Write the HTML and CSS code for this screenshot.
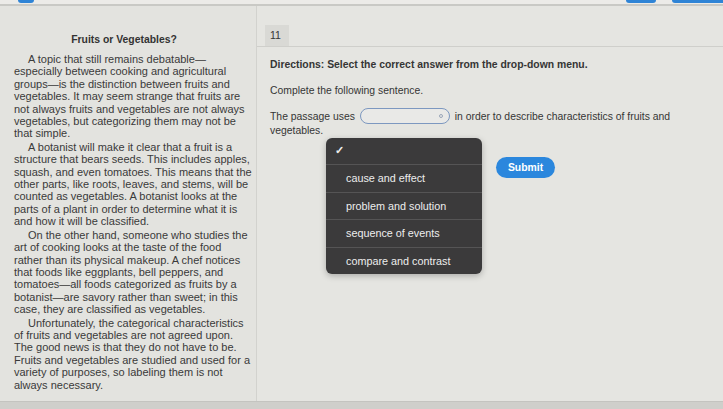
FILE: index.html
```html
<!DOCTYPE html>
<html lang="en">
<head>
<meta charset="UTF-8" />
<meta name="viewport" content="width=device-width,initial-scale=1" />
<title>Fruits or Vegetables?</title>
<link rel="stylesheet" href="styles.css">
</head>
<body>
<div class="topbar">
  <span class="tab tab-left"></span>
  <span class="tab tab-right1"></span>
  <span class="tab tab-right2"></span>
</div>
<main class="layout">
  <section class="passage">
    <h1>Fruits or Vegetables?</h1>
    <p>A topic that still remains debatable—<br>especially between cooking and agricultural<br>groups—is the distinction between fruits and<br>vegetables. It may seem strange that fruits are<br>not always fruits and vegetables are not always<br>vegetables, but categorizing them may not be<br>that simple.</p>
    <p>A botanist will make it clear that a fruit is a<br>structure that bears seeds. This includes apples,<br>squash, and even tomatoes. This means that the<br>other parts, like roots, leaves, and stems, will be<br>counted as vegetables. A botanist looks at the<br>parts of a plant in order to determine what it is<br>and how it will be classified.</p>
    <p>On the other hand, someone who studies the<br>art of cooking looks at the taste of the food<br>rather than its physical makeup. A chef notices<br>that foods like eggplants, bell peppers, and<br>tomatoes—all foods categorized as fruits by a<br>botanist—are savory rather than sweet; in this<br>case, they are classified as vegetables.</p>
    <p>Unfortunately, the categorical characteristics<br>of fruits and vegetables are not agreed upon.<br>The good news is that they do not have to be.<br>Fruits and vegetables are studied and used for a<br>variety of purposes, so labeling them is not<br>always necessary.</p>
  </section>
  <section class="question">
    <div class="qhead"><span class="qnum">11</span></div>
    <div class="qbody">
      <p class="directions">Directions: Select the correct answer from the drop-down menu.</p>
      <p class="prompt">Complete the following sentence.</p>
      <p class="sentence">The passage uses <span class="select"><span class="knob"></span></span> in order to describe characteristics of fruits and vegetables.</p>
      <ul class="menu">
        <li class="checked">&#10003;</li>
        <li>cause and effect</li>
        <li>problem and solution</li>
        <li>sequence of events</li>
        <li>compare and contrast</li>
      </ul>
      <div class="actions">
        <button type="button">Submit</button>
      </div>
    </div>
  </section>
</main>
<footer class="bottombar"></footer>
</body>
</html>
```

FILE: styles.css
```css
* {
  box-sizing: border-box;
}
html, body {
  height: 100%;
}
body {
  margin: 0;
  font-family: 'Liberation Sans', Arial, sans-serif;
  color: #353535;
  background: #e4e4e0;
  display: flex;
  flex-direction: column;
  overflow: hidden;
}
.topbar {
  position: relative;
  height: 6px;
  flex-shrink: 0;
  background: #ecebe8;
  border-bottom: 2px solid #c9c9c5;
}
.tab {
  position: absolute;
  top: 0;
  height: 3px;
  background: #2f84d6;
  border-radius: 0 0 4px 4px;
}
.tab-left { left: 18px; width: 16px; }
.tab-right1 { left: 626px; width: 30px; }
.tab-right2 { left: 672px; width: 60px; }

.layout {
  flex: 1;
  display: flex;
  min-height: 0;
}
.passage {
  width: 257px;
  flex-shrink: 0;
  padding: 27px 0 0 14px;
  border-right: 1px solid #d2d2ce;
  background: #e3e3df;
  color: #3a3a3a;
  font-size: 11px;
  line-height: 12.4px;
  white-space: nowrap;
}
.passage h1 {
  margin: 0 0 6px;
  padding-right: 22px;
  font-size: 10.4px;
  font-weight: 700;
  text-align: center;
  line-height: 14px;
  color: #333;
}
.passage p {
  margin: 0 0 1px;
  text-indent: 14px;
}

.question {
  flex: 1;
  background: #e5e5e1;
}
.qhead {
  margin-top: 19px;
  padding-left: 8px;
  border-bottom: 1px solid #cfcfcb;
}
.qnum {
  display: inline-block;
  width: 24px;
  height: 21px;
  line-height: 21px;
  padding-left: 5px;
  font-size: 10.5px;
  background: #d9d9d5;
}
.qbody {
  position: relative;
  padding: 11px 0 0 13px;
  font-size: 10.4px;
}
.qbody p {
  margin: 0;
}
.directions {
  font-weight: 700;
  line-height: 14px;
  margin-bottom: 12px !important;
}
.prompt {
  line-height: 14px;
  margin-bottom: 10px !important;
}
.sentence {
  line-height: 14px;
  width: 420px;
}
.select {
  display: inline-block;
  position: relative;
  width: 90px;
  height: 16px;
  margin: 0 2px;
  vertical-align: -4px;
  border: 1.5px solid #7d98c0;
  border-radius: 8px;
  background: #e9e9e7;
}
.knob {
  position: absolute;
  right: 6px;
  top: 5px;
  width: 4px;
  height: 4px;
  border: 1px solid #9aa6b8;
  border-radius: 50%;
}
.menu {
  position: absolute;
  left: 69px;
  top: 91px;
  width: 156px;
  margin: 0;
  padding: 0;
  list-style: none;
  background: #3b3a3b;
  border-radius: 6px;
  color: #ededed;
  font-size: 10.8px;
  box-shadow: 0 2px 6px rgba(0,0,0,0.25);
}
.menu li {
  height: 27.5px;
  line-height: 27px;
  padding-left: 20px;
  border-top: 1px solid #555455;
}
.menu li.checked {
  height: 26px;
  line-height: 24px;
  padding-left: 9px;
  border-top: none;
  font-size: 11px;
  font-weight: 700;
}
.actions {
  margin: 19px 0 0 226px;
}
.actions button {
  width: 59px;
  height: 21px;
  padding: 0;
  border: none;
  border-radius: 11px;
  background: #2b87dd;
  color: #fff;
  font-family: inherit;
  font-size: 10.4px;
  font-weight: 700;
}
.bottombar {
  height: 8px;
  flex-shrink: 0;
  background: #cfcfcb;
  border-top: 1px solid #c4c4c0;
}
```
